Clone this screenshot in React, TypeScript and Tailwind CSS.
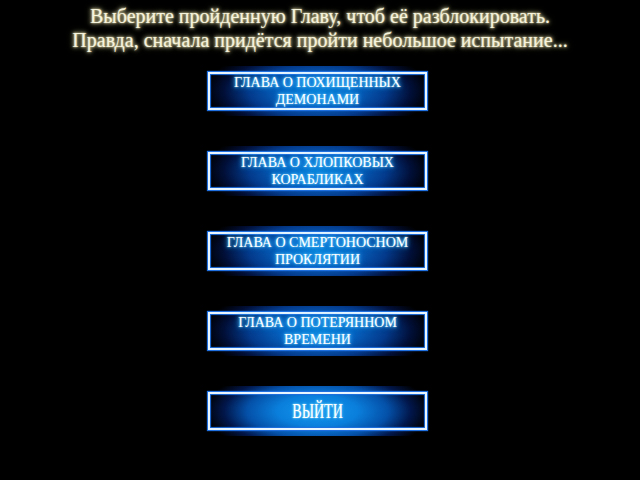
import React from "react";

const chapters = [
  ["ГЛАВА О ПОХИЩЕННЫХ", "ДЕМОНАМИ"],
  ["ГЛАВА О ХЛОПКОВЫХ", "КОРАБЛИКАХ"],
  ["ГЛАВА О СМЕРТОНОСНОМ", "ПРОКЛЯТИИ"],
  ["ГЛАВА О ПОТЕРЯННОМ", "ВРЕМЕНИ"],
];

function GlowButton({ bright, children }: { bright?: boolean; children: React.ReactNode }) {
  return (
    <div className="relative w-[219px] h-[38px]">
      <div
        className={
          bright
            ? "absolute left-0 right-0 -top-[6px] -bottom-[6px] bg-[radial-gradient(ellipse_114px_44px_at_center,#1297ee_0%,#0a7fdc_35%,#0450a8_62%,#01164a_82%,#000_100%)]"
            : "absolute left-0 right-0 -top-[6px] -bottom-[6px] bg-[radial-gradient(ellipse_114px_44px_at_center,#0a7ed8_0%,#0665c4_30%,#033a8c_60%,#010f38_82%,#000_100%)]"
        }
      />
      <div className="absolute inset-0 border-2 border-[#eaf6ff] shadow-[0_0_1px_1px_#1f6fe0,inset_0_0_1px_1px_#1f6fe0] flex flex-col items-center justify-center">
        {children}
      </div>
    </div>
  );
}

export default function App() {
  return (
    <div className="w-[640px] h-[480px] bg-black overflow-hidden font-['Liberation_Serif',serif]">
      <div className="pt-[4px] text-center text-[20px] leading-[24px] text-[#f5f2dc] [text-shadow:0_0_2px_#ece6b4,0_0_4px_#ddd6a0,0_0_6px_rgba(220,215,160,0.6)]">
        <div>Выберите пройденную Главу, чтоб её разблокировать.</div>
        <div>Правда, сначала придётся пройти небольшое испытание...</div>
      </div>
      <div className="ml-[208px] mt-[20px] flex flex-col gap-[42px]">
        {chapters.map((c, i) => (
          <GlowButton key={i}>
            <div className="text-[14px] leading-[17px] text-white text-center [text-shadow:0_0_2px_#7fdcff,0_0_4px_#40c0ff,0_0_6px_#2aa0ff]">
              <div>{c[0]}</div>
              <div>{c[1]}</div>
            </div>
          </GlowButton>
        ))}
        <GlowButton bright>
          <div className="text-[22px] leading-[24px] text-white scale-x-[0.64] [text-shadow:0_0_2px_#9fe6ff,0_0_4px_#60d0ff]">ВЫЙТИ</div>
        </GlowButton>
      </div>
    </div>
  );
}
